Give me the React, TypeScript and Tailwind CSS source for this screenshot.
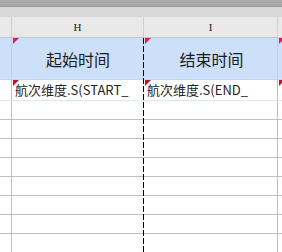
import React from "react";

const cjk = { fontFamily: '"Noto Sans CJK SC", "Liberation Sans", sans-serif' };

const Flag = ({ dark }: { dark?: boolean }) => (
  <svg width="6" height="6" className="absolute left-[1px] top-[0px]" viewBox="0 0 6 6">
    <polygon points="0,0 6,0 0,6" fill={dark ? "#c8102e" : "#f0134d"} />
  </svg>
);

const App: React.FC = () => {
  const emptyRows = [0, 1, 2, 3, 4, 5, 6, 7];

  return (
    <div className="relative w-[282px] h-[252px] overflow-hidden bg-white" style={cjk}>
      {/* toolbar edge */}
      <div className="h-[7px] bg-[#a8a8a8] border-b border-[#9a9a9a]" />
      <div className="h-[10px] bg-[#d8d8d8]" />

      {/* column letters */}
      <div className="flex h-[21px] bg-[#e9e9e9] border-b border-[#c6c6c6]">
        <div className="w-[12px] border-r border-[#cfcfcf]" />
        <div className="w-[132px] border-r border-[#cfcfcf] flex items-center justify-center text-[11px] text-[#222] font-['Liberation_Serif',serif]">
          H
        </div>
        <div className="w-[134px] border-r border-[#cfcfcf] flex items-center justify-center text-[11px] text-[#222] font-['Liberation_Serif',serif]">
          I
        </div>
        <div className="flex-1" />
      </div>

      {/* title row */}
      <div className="flex h-[42px] bg-[#cde0f9] border-b border-[#c4d6ee]">
        <div className="w-[12px] border-r border-[#c0cfe3]" />
        <div className="relative w-[132px] flex items-center justify-center text-[16px] text-[#1b1b1b]">
          <Flag />
          起始时间
        </div>
        <div className="relative w-[134px] border-r border-[#c0cfe3] flex items-center justify-center text-[16px] text-[#1b1b1b] pl-[2px]">
          <Flag />
          结束时间
        </div>
        <div className="relative flex-1">
          <Flag />
        </div>
      </div>

      {/* formula row */}
      <div className="flex h-[21px] border-b border-[#d9e7fa]">
        <div className="w-[12px] border-r border-[#c0c0c0]" />
        <div className="relative w-[132px] flex items-center pl-[3px] text-[13px] text-[#222] whitespace-nowrap overflow-hidden">
          <Flag dark />
          航次维度.S(START_
        </div>
        <div className="relative w-[134px] border-r border-[#c0c0c0] flex items-center pl-[3px] text-[13px] text-[#222] whitespace-nowrap overflow-hidden">
          <Flag dark />
          航次维度.S(END_
        </div>
        <div className="relative flex-1">
          <Flag dark />
        </div>
      </div>

      {/* empty rows */}
      {emptyRows.map((r) => (
        <div key={r} className="flex h-[19px] border-b border-[#c0c0c0]">
          <div className="w-[12px] border-r border-[#c0c0c0]" />
          <div className="w-[132px]" />
          <div className="w-[134px] border-r border-[#c0c0c0]" />
          <div className="flex-1" />
        </div>
      ))}

      {/* page break marker */}
      <svg className="absolute left-[143px] top-[38px]" width="1" height="214">
        <line x1="0.5" y1="0" x2="0.5" y2="214" stroke="#000" strokeWidth="1" strokeDasharray="6 2" />
      </svg>
    </div>
  );
};

export default App;
